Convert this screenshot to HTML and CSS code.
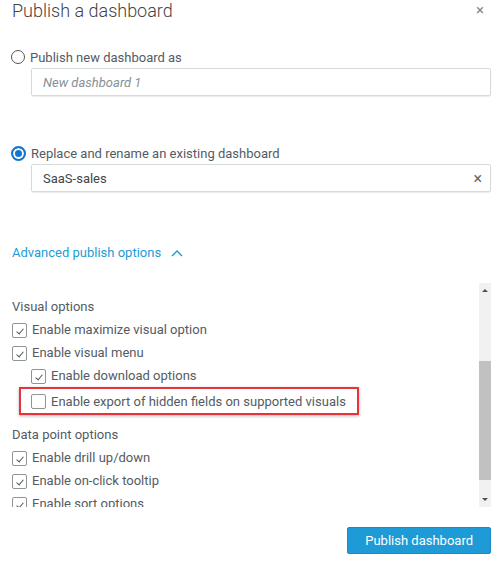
FILE: index.html
```html
<!DOCTYPE html>
<html lang="en">
<head>
    <meta charset="UTF-8">
    <title>Publish a dashboard</title>
    <link rel="stylesheet" href="styles.css">
</head>
<body>
    <div class="dialog">
        <div class="dialog-header">
            <h2>Publish a dashboard</h2>
            <span class="close">&times;</span>
        </div>

        <label class="radio-row first">
            <span class="radio"></span>
            <span>Publish new dashboard as</span>
        </label>
        <div class="text-input">
            <span class="placeholder">New dashboard 1</span>
        </div>

        <label class="radio-row second">
            <span class="radio checked"></span>
            <span>Replace and rename an existing dashboard</span>
        </label>
        <div class="text-input">
            <span class="value">SaaS-sales</span>
            <span class="clear">&times;</span>
        </div>

        <div class="advanced-link">
            Advanced publish options
            <svg class="chevron" width="12" height="8" viewBox="0 0 12 8">
                <path d="M1 7 L6 2 L11 7" fill="none" stroke="#1d9bd6" stroke-width="1.4"/>
            </svg>
        </div>

        <div class="options-box">
            <div class="options-list">
                <div class="section-title">Visual options</div>
                <div class="check-row"><span class="check on"></span>Enable maximize visual option</div>
                <div class="check-row"><span class="check on"></span>Enable visual menu</div>
                <div class="check-row sub"><span class="check on"></span>Enable download options</div>
                <div class="highlight">
                    <div class="check-row"><span class="check"></span>Enable export of hidden fields on supported visuals</div>
                </div>
                <div class="section-title data">Data point options</div>
                <div class="check-row"><span class="check on"></span>Enable drill up/down</div>
                <div class="check-row"><span class="check on"></span>Enable on-click tooltip</div>
                <div class="check-row"><span class="check on"></span>Enable sort options</div>
            </div>
            <div class="scrollbar">
                <span class="arrow up"></span>
                <div class="track">
                    <div class="thumb"></div>
                </div>
                <span class="arrow down"></span>
            </div>
        </div>

        <div class="footer">
            <button class="publish-btn">Publish dashboard</button>
        </div>
    </div>
</body>
</html>
```

FILE: styles.css
```css
body {
    margin: 0;
    background-color: #fff;
    font-family: 'Roboto', 'Liberation Sans', sans-serif;
    font-size: 13px;
    color: #545b64;
}

.dialog {
    width: 500px;
    height: 570px;
    padding: 0 9px 0 12px;
    box-sizing: border-box;
}

.dialog-header {
    display: flex;
    justify-content: space-between;
    align-items: flex-start;
    height: 26px;
}

h2 {
    margin: 0;
    font-size: 18px;
    font-weight: 300;
    color: #444;
    line-height: 22px;
}

.close {
    font-size: 15px;
    color: #888;
    line-height: 20px;
    margin-right: 7px;
}

.radio-row {
    display: flex;
    align-items: center;
    gap: 5px;
    height: 20px;
    margin-left: -1px;
}

.radio-row.first {
    margin-top: 21px;
}

.radio-row.second {
    margin-top: 47px;
}

.radio {
    width: 12px;
    height: 12px;
    border: 1px solid #555;
    border-radius: 50%;
    flex-shrink: 0;
}

.radio.checked {
    border: 2px solid #1175d3;
    width: 11px;
    height: 11px;
    background-color: #1175d3;
    box-shadow: inset 0 0 0 2px #fff;
}

.text-input {
    margin: 1px 0 0 19px;
    height: 26px;
    border: 1px solid #d5dbdb;
    border-radius: 2px;
    display: flex;
    align-items: center;
    justify-content: space-between;
    padding: 0 8px 0 11px;
    box-shadow: 0 1px 1px rgba(0, 0, 0, 0.08);
}

.placeholder {
    font-style: italic;
    color: #879196;
}

.value {
    color: #444;
}

.clear {
    font-size: 16px;
    color: #666;
}

.advanced-link {
    margin-top: 51px;
    height: 20px;
    line-height: 20px;
    color: #1d9bd6;
    display: flex;
    align-items: center;
    gap: 10px;
}

.options-box {
    margin-top: 20px;
    height: 224px;
    display: flex;
    margin-left: -12px;
    padding-left: 12px;
}

.options-list {
    flex: 1;
    overflow: hidden;
    padding-top: 12px;
}

.section-title {
    height: 23px;
    line-height: 23px;
}

.section-title.data {
    margin-top: 8px;
}

.check-row {
    display: flex;
    align-items: center;
    gap: 5px;
    height: 23px;
    line-height: 23px;
    white-space: nowrap;
}

.check-row.sub {
    padding-left: 19px;
}

.check {
    width: 13px;
    height: 13px;
    border: 1px solid #8d9596;
    border-radius: 2px;
    flex-shrink: 0;
    position: relative;
    margin-top: 1px;
}

.check.on:after {
    content: "";
    position: absolute;
    left: 5px;
    top: 3px;
    width: 3px;
    height: 6px;
    border-right: 1px solid #555;
    border-bottom: 1px solid #555;
    transform: rotate(40deg);
}

.highlight {
    width: fit-content;
    margin-left: 7px;
    border: 2px solid #e8333a;
    padding: 0 11px 0 10px;
    height: 24px;
    display: flex;
    align-items: center;
    box-shadow: 0 1px 3px rgba(0, 0, 0, 0.3);
}

/* fake scrollbar */
.scrollbar {
    width: 12px;
    background-color: #f1f1f1;
    display: flex;
    flex-direction: column;
    align-items: center;
}

.arrow {
    width: 0;
    height: 0;
    border-left: 3px solid transparent;
    border-right: 3px solid transparent;
    margin: 6px 0;
}

.arrow.up {
    border-bottom: 3px solid #505050;
}

.arrow.down {
    border-top: 3px solid #505050;
}

.track {
    flex: 1;
    width: 100%;
}

.thumb {
    margin-top: 63px;
    height: 119px;
    background-color: #c1c1c1;
}

.footer {
    display: flex;
    justify-content: flex-end;
    margin-top: 20px;
}

.publish-btn {
    font-family: inherit;
    font-size: 13px;
    color: #fff;
    background-color: #1e9bd7;
    border: 1px solid #1a8bc4;
    border-radius: 2px;
    height: 27px;
    padding: 0 17px;
}
```
